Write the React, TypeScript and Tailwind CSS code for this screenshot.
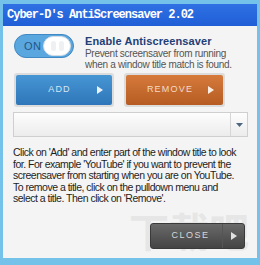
import React from "react";

function Arrow({ className }: { className?: string }) {
  return (
    <svg width="6" height="8" viewBox="0 0 6 8" className={className}>
      <path d="M0 0 L6 4 L0 8 Z" fill="currentColor" />
    </svg>
  );
}

export default function App() {
  return (
    <div className="w-[260px] h-[265px] bg-[#74c2ea] pt-[4px] px-[3px] pb-[7px] flex flex-col font-['Liberation_Sans',Arial,sans-serif]">
      {/* Title bar */}
      <div className="h-[22px] bg-gradient-to-b from-[#2f71e4] to-[#205ed6] flex items-center pl-[4px] flex-shrink-0">
        <span className="text-white font-bold text-[12px] tracking-[-1px] font-['Liberation_Mono',monospace] whitespace-nowrap">
          Cyber-D's AntiScreensaver 2.02
        </span>
      </div>

      {/* Body */}
      <div className="relative flex-1 bg-[#f4f4f4] pl-[10px] pr-[9px] pt-[8px] overflow-hidden">
        {/* watermark */}
        <div className="absolute left-[126px] top-[184px] text-[40px] leading-none font-bold text-[#e6e6e6] font-['Noto_Sans_CJK_SC',sans-serif] select-none">
          下载吧
        </div>

        <div className="relative">
          {/* Toggle row */}
          <div className="flex items-start gap-[11px] pl-[1px]">
            <div className="w-[60px] h-[24px] rounded-full bg-[#5aa6de] border border-[#4189c5] flex items-center justify-between pl-[9px] pr-[2px] flex-shrink-0">
              <span className="text-[11px] text-[#23568a] tracking-[0.5px]">ON</span>
              <div className="w-[28px] h-[20px] rounded-full bg-white border border-[#d5dde4] flex items-center justify-center gap-[3px]">
                <div className="w-[5px] h-[10px] rounded-full bg-[#eef0f2]" />
                <div className="w-[5px] h-[10px] rounded-full bg-[#eef0f2]" />
              </div>
            </div>
            <div className="whitespace-nowrap">
              <div className="text-[11px] font-bold text-[#1f3f76] leading-[14px] tracking-[0.1px]">
                Enable Antiscreensaver
              </div>
              <div className="text-[10px] text-[#555] leading-[11px] tracking-[-0.3px]">
                Prevent screensaver from running
                <br />
                when a window title match is found.
              </div>
            </div>
          </div>

          {/* Buttons */}
          <div className="flex gap-[10px] mt-[3px] ml-[1px]">
            <div className="p-[2px] bg-[#dcdcdc] rounded-[3px]">
              <div className="w-[96px] h-[30px] rounded-[2px] bg-gradient-to-b from-[#4796d4] to-[#2e76b9] flex items-center text-[#d6e7f6]">
                <span className="flex-1 text-center text-[9px] tracking-[1.2px] pl-[6px]">ADD</span>
                <Arrow className="mr-[9px] text-[#eaf3fb]" />
              </div>
            </div>
            <div className="p-[2px] bg-[#dcdcdc] rounded-[3px]">
              <div className="w-[97px] h-[30px] rounded-[2px] bg-gradient-to-b from-[#d67a3c] to-[#b65c22] flex items-center text-[#f3dac8]">
                <span className="flex-1 text-center text-[9px] tracking-[1.2px] pl-[6px]">REMOVE</span>
                <Arrow className="mr-[9px] text-[#fbeee4]" />
              </div>
            </div>
          </div>

          {/* Dropdown */}
          <div className="mt-[5px] h-[25px] border border-[#cfcfcf] bg-gradient-to-b from-[#fdfdfd] to-[#ececec] flex">
            <div className="flex-1" />
            <div className="w-[17px] border-l border-[#d6d6d6] flex items-center justify-center">
              <svg width="7" height="4" viewBox="0 0 7 4">
                <path d="M0 0 L7 0 L3.5 4 Z" fill="#4d6680" />
              </svg>
            </div>
          </div>

          {/* Help text */}
          <p className="mt-[10px] text-[10.5px] leading-[11.6px] text-[#1e1e1e] whitespace-nowrap tracking-[-0.5px]">
            Click on 'Add' and enter part of the window title to look
            <br />
            for. For example 'YouTube' if you want to prevent the
            <br />
            screensaver from starting when you are on YouTube.
            <br />
            To remove a title, click on the pulldown menu and
            <br />
            select a title. Then click on 'Remove'.
          </p>

          {/* Close */}
          <div className="flex justify-end mt-[18px] pr-[3px]">
            <div className="w-[95px] h-[26px] rounded-[3px] bg-gradient-to-b from-[#6a6a6a] to-[#444] border border-[#3a3a3a] flex items-center text-[#d8d8d8]">
              <span className="flex-1 text-center text-[9px] tracking-[1.5px] pl-[8px]">CLOSE</span>
              <div className="h-full border-l border-[#555] w-[22px] flex items-center justify-center">
                <Arrow className="text-[#e0e0e0]" />
              </div>
            </div>
          </div>
        </div>
      </div>
    </div>
  );
}
